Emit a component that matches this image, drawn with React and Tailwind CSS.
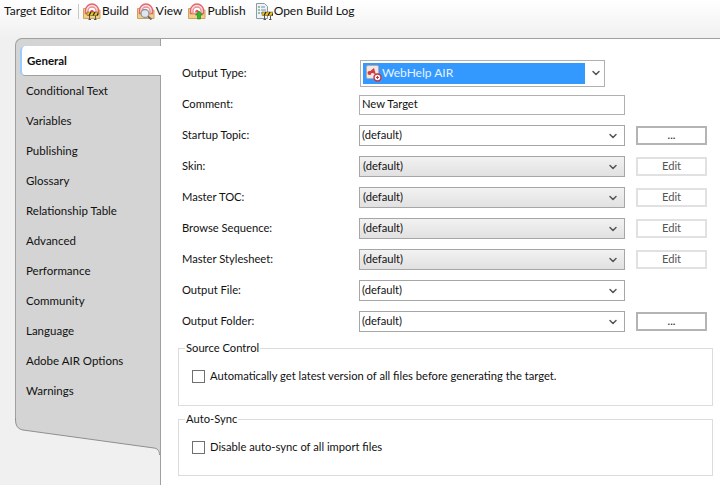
import { ChevronDown } from 'lucide-react'

const tabs = [
  'Conditional Text',
  'Variables',
  'Publishing',
  'Glossary',
  'Relationship Table',
  'Advanced',
  'Performance',
  'Community',
  'Language',
  'Adobe AIR Options',
  'Warnings',
]

function Folder() {
  return <path d="M.5 6.500h4l1 1.500h11.500v8.500h-16.500z" fill="#f3cf83" stroke="#c9a460" strokeWidth="1" />
}

function Rings() {
  return (
    <g fill="none">
      <path d="M2.500 8.500a6.500 6.500 0 0 1 13 0v3h-13z" fill="#fbe3df" stroke="#e4656f" strokeWidth="1.400" />
      <path d="M5 9a4 4 0 0 1 8 0v2.500h-8z" fill="#fff" stroke="#ee8f94" strokeWidth="1.400" />
      <path d="M7.300 9.500a1.700 1.700 0 0 1 3.400 0v1h-3.400z" fill="#e4505c" />
    </g>
  )
}

function Barrier({ x = 0, y = 0 }) {
  return (
    <g transform={`translate(${x} ${y})`}>
      <path d="M2.500 3.500v4M8.500 3.500v4M1.500 7.500h2.500M7 7.500h2.500" stroke="#555" strokeWidth="1" fill="none" />
      <rect x="0" y="0" width="11" height="3.500" fill="#f2c417" stroke="#333" strokeWidth="0.400" />
      <path d="M2 3.500l2-3.500M6 3.500l2-3.500M10 3.500l1-2" stroke="#222" strokeWidth="1.200" />
    </g>
  )
}

function BuildIcon() {
  return (
    <svg width="18" height="18" viewBox="0 0 18 18" className="shrink-0">
      <Folder />
      <Rings />
      <Barrier x="4" y="10" />
    </svg>
  )
}

function ViewIcon() {
  return (
    <svg width="18" height="18" viewBox="0 0 18 18" className="shrink-0">
      <Folder />
      <Rings />
      <circle cx="8" cy="11.500" r="4" fill="#dfe6ec" stroke="#8f979e" strokeWidth="1.300" />
      <path d="M11 14.500l3.500 3" stroke="#666" strokeWidth="1.800" />
    </svg>
  )
}

function PublishIcon() {
  return (
    <svg width="18" height="18" viewBox="0 0 18 18" className="shrink-0">
      <Folder />
      <Rings />
      <path d="M11 9l3.500 4h-2v4h-3v-4h-2z" fill="#35b52f" stroke="#1d7d1c" strokeWidth="0.600" />
    </svg>
  )
}

function LogIcon() {
  return (
    <svg width="18" height="18" viewBox="0 0 18 18" className="shrink-0">
      <path d="M1.500 1.500h8l3 3v12h-11z" fill="#eef3f7" stroke="#8c9aa5" />
      <path d="M3 5h2M3 8h2M3 11h2" stroke="#3f8f4a" strokeWidth="1" />
      <path d="M6 5h4M6 8h5M6 11h3" stroke="#6f8fb5" strokeWidth="1" />
      <Barrier x="7" y="10" />
    </svg>
  )
}

function AirIcon() {
  return (
    <svg width="16" height="17" viewBox="0 0 16 17" className="shrink-0">
      <rect x="0.500" y="0.500" width="12" height="13" rx="1.500" fill="#eee9e6" stroke="#b9a9a5" />
      <path d="M2 8l6-5 2 7-3-2z" fill="#d73a3f" />
      <circle cx="3.500" cy="8" r="2" fill="#d73a3f" />
      <circle cx="11.500" cy="12.500" r="3.500" fill="#fff" stroke="#c8323a" strokeWidth="1.400" />
      <path d="M10 12.500h3M11.500 11v3" stroke="#c8323a" strokeWidth="1" />
    </svg>
  )
}

function ToolButton({ icon, label, className = '' }) {
  return (
    <div className={`flex items-center gap-[1px] whitespace-nowrap ${className}`}>
      {icon}
      <span>{label}</span>
    </div>
  )
}

function Chevron() {
  return <ChevronDown size={12} strokeWidth={3} className="text-[#555] shrink-0" />
}

function Select({ grey }) {
  return (
    <div
      className={`h-[21px] w-[266px] border border-[#a6a6a6] flex items-center justify-between pr-[5px] ${
        grey ? 'bg-gradient-to-b from-[#f2f2f2] to-[#e1e1e1] pl-[3px]' : 'bg-white pl-[2px]'
      }`}
    >
      <span>(default)</span>
      <Chevron />
    </div>
  )
}

function Row({ label, children, action }) {
  return (
    <div className="flex items-center h-[31px]">
      <span className="w-[177px] shrink-0">{label}</span>
      {children}
      {action}
    </div>
  )
}

function SideButton({ label, disabled }) {
  return (
    <div
      className={`ml-[11px] w-[71px] h-[19px] flex items-center justify-center bg-white border-2 ${
        disabled ? 'border-[#e1e1e1] text-[#555]' : 'border-[#b4b4b4] text-[#222]'
      }`}
    >
      {label}
    </div>
  )
}

function Group({ title, label, className = '' }) {
  return (
    <fieldset className={`border border-[#dcdcdc] w-[535px] ml-[-4px] pl-[13px] ${className}`}>
      <legend className="ml-[-7px] px-[1px] leading-[14px]">{title}</legend>
      <div className="flex items-center gap-[5px] mt-[13px]">
        <span className="w-[13px] h-[13px] border border-[#707070] bg-white" />
        <span>{label}</span>
      </div>
    </fieldset>
  )
}

export default function App() {
  return (
    <div className="w-[720px] h-[485px] overflow-hidden bg-[#f0f0f0] text-[#111] text-[12px] font-['Lato',sans-serif] flex flex-col">
      <div className="h-[38px] shrink-0 bg-gradient-to-b from-white to-[#f0f0f0] flex items-start pt-[2px] pl-[4px]">
        <div className="flex items-center h-[18px] w-[74px] whitespace-nowrap">Target Editor</div>
        <div className="flex items-center h-[18px]">
          <span className="w-px h-[15px] bg-[#c8c8c8] mr-[4px]" />
          <ToolButton icon={<BuildIcon />} label="Build" />
          <ToolButton className="ml-[8px]" icon={<ViewIcon />} label="View" />
          <ToolButton className="ml-[6px]" icon={<PublishIcon />} label="Publish" />
          <ToolButton className="ml-[9px]" icon={<LogIcon />} label="Open Build Log" />
        </div>
      </div>

      <div className="flex flex-1 min-h-0 pl-[15px]">
        <div className="w-[145px] shrink-0 relative z-10 flex flex-col text-[11.5px]">
          <div className="h-[380px] bg-[#d4d4d4] border-l border-t border-[#a0a0a0] rounded-tl-[7px] pt-[7px] pl-[4px] shrink-0">
            <div className="h-[30px] -mr-[1px] flex items-center pl-[5px] bg-white border-l-2 border-[#99ccff] border-b border-b-[#a0a0a0] rounded-l-[5px] font-bold">
              General
            </div>
            {tabs.map((t) => (
              <div key={t} className="h-[30px] flex items-center pl-[6px]">
                {t}
              </div>
            ))}
          </div>
          <svg width="145" height="38" viewBox="0 0 145 38" className="shrink-0">
            <path d="M0 0v1C0 8 3 11 8 12L139 30c3 .5 6 2 6 7V0z" fill="#d4d4d4" />
            <path d="M.5 0v1C.5 8 3 11 8 12L139 30c3 .5 5.500 2 5.500 7" fill="none" stroke="#8f8f8f" />
          </svg>
        </div>

        <div className="flex-1 bg-white border-l border-t border-[#a0a0a0] pl-[21px] pt-[19px] text-[11.2px]">
          <Row label="Output Type:">
            <div className="w-[245px] h-[27px] border border-[#b0b0b0] flex items-center justify-between ml-[1px] pl-[2px] pr-[2px] -mt-[1px]">
              <div className="w-[222px] h-[21px] bg-[#3399ff] text-[#e8f2ff] flex items-center pl-[3px] text-[12px]">
                <AirIcon />
                <span>WebHelp AIR</span>
              </div>
              <Chevron />
            </div>
          </Row>
          <Row label="Comment:">
            <div className="w-[266px] h-[20px] border border-[#b0b0b0] flex items-center pl-[2px] bg-white">New Target</div>
          </Row>
          <Row label="Startup Topic:" action={<SideButton label="..." />}>
            <Select />
          </Row>
          <Row label="Skin:" action={<SideButton label="Edit" disabled />}>
            <Select grey />
          </Row>
          <Row label="Master TOC:" action={<SideButton label="Edit" disabled />}>
            <Select grey />
          </Row>
          <Row label="Browse Sequence:" action={<SideButton label="Edit" disabled />}>
            <Select grey />
          </Row>
          <Row label="Master Stylesheet:" action={<SideButton label="Edit" disabled />}>
            <Select grey />
          </Row>
          <Row label="Output File:">
            <Select />
          </Row>
          <Row label="Output Folder:" action={<SideButton label="..." />}>
            <Select />
          </Row>
          <Group className="mt-[4px] h-[65px]" title="Source Control" label="Automatically get latest version of all files before generating the target." />
          <Group className="mt-[6px] h-[64px]" title="Auto-Sync" label="Disable auto-sync of all import files" />
        </div>
      </div>
    </div>
  )
}
